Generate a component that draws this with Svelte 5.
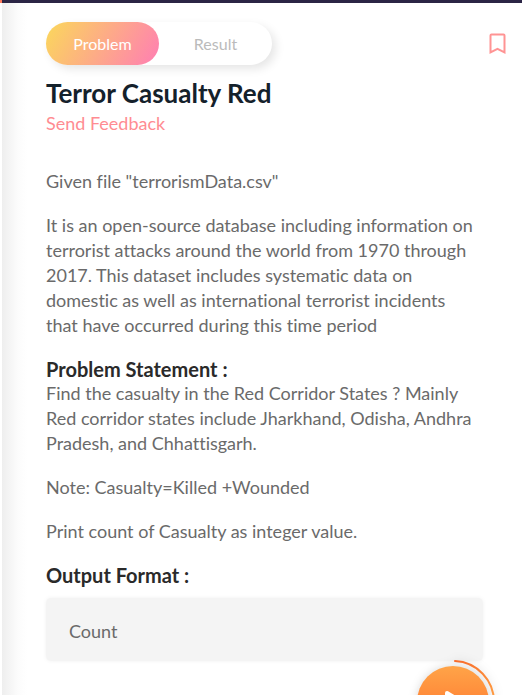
<script>
  let active = $state('Problem');
  let saved = $state(false);
  const tabs = ['Problem', 'Result'];
</script>

<div class="page">
  <div class="topbar"></div>
  <main>
    <header>
      <div class="tabs" role="tablist" aria-label="Views">
        {#each tabs as tab}
          <button role="tab" class:active={active === tab} aria-selected={active === tab} onclick={() => (active = tab)}>{tab}</button>
        {/each}
      </div>
      <button class="bookmark" aria-label="Bookmark" aria-pressed={saved} onclick={() => (saved = !saved)}>
        <svg width="17" height="22" viewBox="0 0 17 22" fill={saved ? '#ff9494' : 'none'}>
          <path d="M1.5 2.5Q1.5 1.5 2.5 1.5H14.5Q15.5 1.5 15.5 2.5V19.4L8.5 15.8L1.5 19.4Z" stroke="#ff9494" stroke-width="2" />
        </svg>
      </button>
    </header>

    <h1>Terror Casualty Red</h1>
    <a class="feedback" href="#feedback">Send Feedback</a>

    <article>
      <p>Given file "terrorismData.csv"</p>
      <p>It is an open-source database including information on terrorist attacks around the world from 1970 through 2017. This dataset includes systematic data on domestic as well as international terrorist incidents that have occurred during this time period</p>
      <section>
        <h2>Problem Statement :</h2>
        <p>Find the casualty in the Red Corridor States ? Mainly Red corridor states include Jharkhand, Odisha, Andhra Pradesh, and Chhattisgarh.</p>
      </section>
      <p>Note: Casualty=Killed +Wounded</p>
      <p>Print count of Casualty as integer value.</p>
      <h2>Output Format :</h2>
    </article>
    <div class="output">Count</div>
  </main>

  <button class="run" aria-label="Play">
    <svg width="96" height="96" viewBox="0 0 96 96">
      <defs>
        <linearGradient id="disc" x1="0" y1="0" x2="0" y2="1">
          <stop offset="0" stop-color="#ffa448" />
          <stop offset="1" stop-color="#ff6a28" />
        </linearGradient>
        <linearGradient id="arc" x1="0" y1="0" x2="1" y2="1">
          <stop offset="0" stop-color="#f76b2b" />
          <stop offset="1" stop-color="#ff9f43" />
        </linearGradient>
      </defs>
      <circle cx="48" cy="48" r="36" fill="url(#disc)" />
      <path d="M50 7A41 41 0 0 1 89 48" fill="none" stroke="url(#arc)" stroke-width="2" stroke-linecap="round" />
      <path d="M42 39L57 48L42 57Z" fill="#fff" stroke="#fff" stroke-width="4" stroke-linejoin="round" />
    </svg>
  </button>
</div>

<style>
  :global(body) {
    margin: 0;
    background: #fff;
  }
  .page {
    min-height: 100vh;
    display: flex;
    flex-direction: column;
    box-sizing: border-box;
    font-family: Lato, "Liberation Sans", sans-serif;
    font-variant-ligatures: none;
    color: #6a6a6a;
  }
  .topbar {
    height: 3px;
    background: #2b2545;
    border-left: 2px solid #ff7a5c;
    box-sizing: border-box;
  }
  main {
    flex: 1;
    margin-left: 2px;
    padding: 19px 39px 32px 44px;
    background: linear-gradient(90deg, #eee, #f5f5f5 8px, #fcfcfc 16px, #fff 26px);
  }
  button {
    font: inherit;
    border: 0;
    padding: 0;
    background: none;
    cursor: pointer;
  }
  header {
    display: flex;
    justify-content: space-between;
    align-items: center;
    margin-right: -23px;
  }
  .tabs {
    display: flex;
    border-radius: 22px;
    background: #fff;
    box-shadow: 4px 4px 10px rgba(0, 0, 0, 0.1);
  }
  .tabs button {
    width: 113px;
    height: 43px;
    border-radius: 22px;
    font-size: 16px;
    color: #bbb;
  }
  .tabs button.active {
    color: #fff;
    background: linear-gradient(120deg, #fbd85b, #ff7eb3);
  }
  .bookmark {
    display: flex;
  }
  h1 {
    margin: 12px 0 0;
    font-size: 26px;
    line-height: 32px;
    font-weight: 700;
    color: #14212b;
  }
  .feedback {
    display: block;
    width: fit-content;
    margin-top: 4px;
    font-size: 18px;
    line-height: 20px;
    color: #ff8c92;
    text-decoration: none;
  }
  article {
    display: flex;
    flex-direction: column;
    gap: 19px;
    margin-top: 36px;
    padding-right: 4px;
    font-size: 18px;
    line-height: 25px;
  }
  p,
  h2 {
    margin: 0;
  }
  h2 {
    font-size: 20px;
    line-height: 24px;
    font-weight: 700;
    color: #2a2a2a;
  }
  .output {
    margin-top: 11px;
    padding: 21px 23px 17px;
    font-size: 18px;
    line-height: 25px;
    background: #f4f4f4;
    border-radius: 5px;
    box-shadow: 0 0 4px rgba(0, 0, 0, 0.06);
  }
  .run {
    position: fixed;
    right: 21px;
    bottom: -55px;
    display: flex;
    filter: drop-shadow(0 0 5px rgba(0, 0, 0, 0.15));
  }
</style>
